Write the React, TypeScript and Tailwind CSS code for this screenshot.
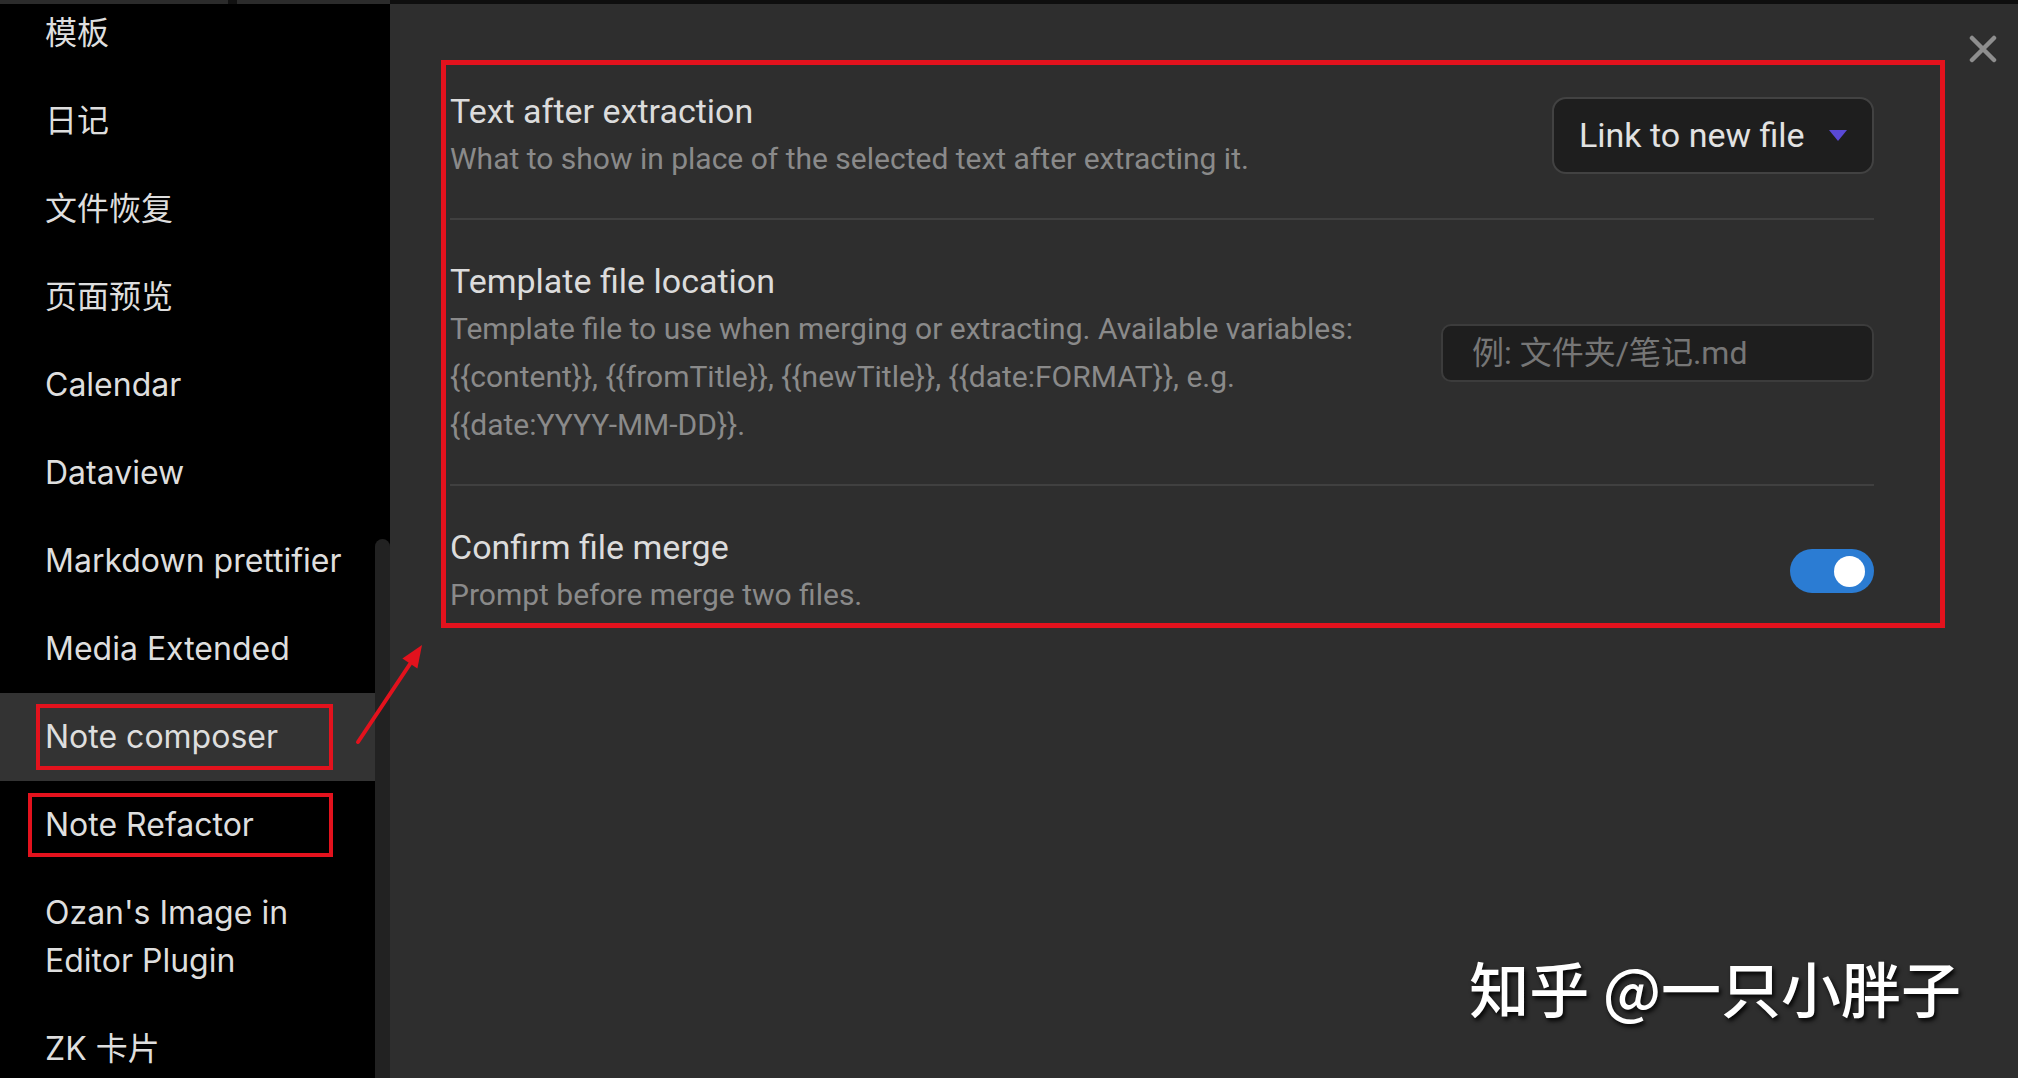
import React from "react";

const navItems: { label: string[]; active?: boolean; mark?: "composer" | "refactor" }[] = [
  { label: ["模板"] },
  { label: ["日记"] },
  { label: ["文件恢复"] },
  { label: ["页面预览"] },
  { label: ["Calendar"] },
  { label: ["Dataview"] },
  { label: ["Markdown prettifier"] },
  { label: ["Media Extended"] },
  { label: ["Note composer"], active: true, mark: "composer" },
  { label: ["Note Refactor"], mark: "refactor" },
  { label: ["Ozan's Image in", "Editor Plugin"] },
  { label: ["ZK 卡片"] },
];

const SettingRow = ({
  title,
  desc,
  first,
  children,
}: {
  title: string;
  desc: string[];
  first?: boolean;
  children: React.ReactNode;
}) => (
  <div
    className={`flex items-center justify-between pb-[35px] ${
      first ? "pt-[38px]" : "border-t-2 border-[#404040] pt-[37px]"
    }`}
  >
    <div className="flex flex-col">
      <div className="text-[34px] leading-[48px] text-[#dcdcdc]">{title}</div>
      <div className="text-[30px] leading-[48px] text-[#8a8a8a]">
        {desc.map((line, i) => (
          <div key={i}>{line}</div>
        ))}
      </div>
    </div>
    {children}
  </div>
);

export default function App() {
  return (
    <div className="relative flex h-[1078px] w-[2018px] flex-col overflow-hidden bg-[#2e2e2e]">
      {/* top strip */}
      <div className="flex h-[4px] shrink-0">
        <div className="w-[228px] bg-[#2b2b2b]" />
        <div className="w-[9px] bg-[#111]" />
        <div className="w-[153px] bg-[#2b2b2b]" />
        <div className="flex-1 bg-[#0e0e0e]" />
      </div>

      <div className="flex min-h-0 flex-1">
        {/* SIDEBAR */}
        <aside className="flex w-[390px] shrink-0 bg-black font-['Inter','Noto_Sans_CJK_SC',sans-serif]">
          <nav className="-mt-[15px] flex w-[375px] flex-col">
            {navItems.map((item) => (
              <div
                key={item.label.join(" ")}
                className={`relative whitespace-nowrap py-[20px] pl-[45px] pr-[8px] text-[32px] leading-[48px] text-[#dedede] ${
                  item.active ? "bg-[#333333]" : ""
                }`}
              >
                {item.label.map((l) => (
                  <div key={l}>{l}</div>
                ))}
                {item.mark === "composer" && (
                  <div className="absolute left-[36px] top-[11px] h-[66px] w-[297px] border-[4px] border-[#e3121d]" />
                )}
                {item.mark === "refactor" && (
                  <div className="absolute left-[28px] top-[12px] h-[64px] w-[305px] border-[4px] border-[#e3121d]" />
                )}
              </div>
            ))}
          </nav>
          {/* scrollbar */}
          <div className="flex w-[15px] flex-col pt-[535px]">
            <div className="flex-1 rounded-t-[8px] bg-[#222222]" />
          </div>
        </aside>

        {/* MAIN */}
        <main className="relative flex-1 pl-[60px] pr-[144px] pt-[45px] font-['Roboto','Noto_Sans_CJK_SC',sans-serif]">
          <button className="absolute right-[21px] top-[31px] h-[28px] w-[28px]">
            <svg viewBox="0 0 28 28" className="h-full w-full">
              <path d="M3 3 L25 25 M25 3 L3 25" stroke="#8e8e8e" strokeWidth="4.5" strokeLinecap="round" />
            </svg>
          </button>

          <div className="flex flex-col">
            <SettingRow
              first
              title="Text after extraction"
              desc={["What to show in place of the selected text after extracting it."]}
            >
              <div className="flex h-[77px] w-[322px] items-center justify-between rounded-[14px] border-2 border-[#424242] bg-[#1e1e1e] pl-[25px] pr-[25px]">
                <span className="text-[34px] text-[#e2e2e2]">Link to new file</span>
                <svg width="18" height="11" viewBox="0 0 18 11">
                  <path d="M0 0 H18 L9 11 Z" fill="#5a49d6" />
                </svg>
              </div>
            </SettingRow>

            <SettingRow
              title="Template file location"
              desc={[
                "Template file to use when merging or extracting. Available variables:",
                "{{content}}, {{fromTitle}}, {{newTitle}}, {{date:FORMAT}}, e.g.",
                "{{date:YYYY-MM-DD}}.",
              ]}
            >
              <div className="flex h-[58px] w-[433px] items-center rounded-[10px] border-2 border-[#3c3c3c] bg-[#1e1e1e] pl-[29px]">
                <span className="text-[32px] text-[#767676]">例: 文件夹/笔记.md</span>
              </div>
            </SettingRow>

            <SettingRow title="Confirm file merge" desc={["Prompt before merge two files."]}>
              <div className="flex h-[44px] w-[84px] items-center justify-end rounded-full bg-[#2b7cd3] pr-[9px]">
                <div className="h-[31px] w-[31px] rounded-full bg-white" />
              </div>
            </SettingRow>
          </div>

          {/* annotation box */}
          <div className="pointer-events-none absolute left-[51px] top-[56px] h-[568px] w-[1504px] border-[5px] border-[#e3121d]" />

          {/* watermark */}
          <div className="absolute bottom-[61px] right-[57px] font-['Noto_Sans_CJK_SC',sans-serif] text-[60px] font-medium leading-none text-white [text-shadow:2px_3px_4px_rgba(0,0,0,0.9)]">
            知乎 @一只小胖子
          </div>
        </main>
      </div>

      {/* annotation arrow */}
      <svg className="pointer-events-none absolute left-[350px] top-[635px]" width="80" height="115" viewBox="0 0 80 115">
        <path d="M8 107 L60 29" stroke="#e3121d" strokeWidth="4" strokeLinecap="round" />
        <path d="M72 10 L67.4 33.4 L52.4 23.4 Z" fill="#e3121d" />
      </svg>
    </div>
  );
}
